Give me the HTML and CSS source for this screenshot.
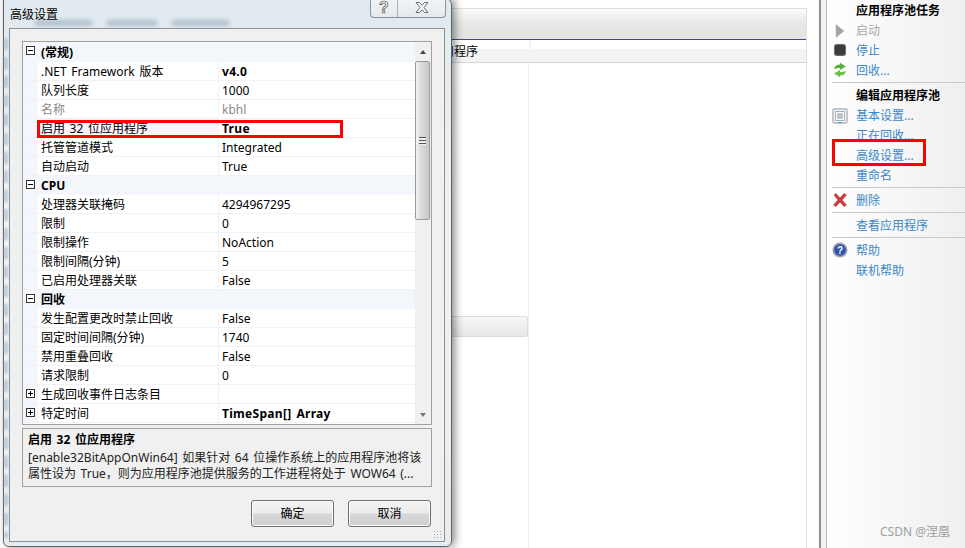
FILE: index.html
```html
<!DOCTYPE html>
<html lang="zh-CN">
<head>
<meta charset="utf-8">
<title>高级设置</title>
<link rel="stylesheet" href="styles.css">
</head>
<body>
<div class="desktop">
  <section class="features">
    <div class="features-head"></div>
    <div class="columns"><div class="col col-a">应用程序</div><div class="col col-b"></div></div>
    <div class="rows"><div class="rows-a"><div class="selected-row"></div></div></div>
  </section>

  <aside class="actions">
    <h3 class="act-title">应用程序池任务</h3>
    <div class="act act-short act-off"><svg class="ico" viewBox="0 0 16 16"><path d="M4 1.500l8 6.500-8 6.500z" fill="#a4a4a4" stroke="#b8b8b8" stroke-width=".6"/></svg>启动</div>
    <div class="act"><svg class="ico" viewBox="0 0 16 16"><rect x="2.500" y="2.500" width="11" height="11" rx="2" fill="#3c3c3c" stroke="#6a6a6a"/></svg>停止</div>
    <div class="act"><svg class="ico" viewBox="0 0 16 16"><path d="M2 7c.5-3 3-4.500 6-4.500V.8L14 4.500 8 8V6C6 6 4.500 6.300 2 7z" fill="#58b038"/><path d="M14 9c-.5 3-3 4.500-6 4.500v1.700L2 11.500 8 8v2c2 0 3.500-.3 6-1z" fill="#6cc04a"/></svg>回收...</div>
    <hr class="act-sep">
    <h3 class="act-title">编辑应用程序池</h3>
    <div class="act act-short"><svg class="ico" viewBox="0 0 16 16"><rect x="1" y="1" width="14" height="14" rx="1" fill="#f4f6f8" stroke="#8c96a0"/><rect x="3.500" y="3.500" width="9" height="9" fill="#fff" stroke="#a8b0b8"/><path d="M5 6h6M5 8h6M5 10h6" stroke="#7a8a9a"/><path d="M6 14.500h4" stroke="#3aa0e0"/></svg>基本设置...</div>
    <div class="act">正在回收...</div>
    <div class="act">高级设置...</div>
    <div class="act">重命名</div>
    <hr class="act-sep">
    <div class="act"><svg class="ico" viewBox="0 0 16 16"><path d="M2 3l2-1.500L8 6l4-4.500L14.500 3 10 8l4.500 5-2.500 1.500L8 10l-4 4.500L1.500 13 6 8z" fill="#d43a3a" stroke="#a82c2c" stroke-width=".5"/></svg>删除</div>
    <hr class="act-sep">
    <div class="act">查看应用程序</div>
    <hr class="act-sep">
    <div class="act"><svg class="ico" viewBox="0 0 16 16"><circle cx="8" cy="8" r="7.500" fill="#9aa2ac"/><circle cx="8" cy="8" r="5.800" fill="#2c52b0"/><text x="8" y="11.500" class="ico-q">?</text></svg>帮助</div>
    <div class="act">联机帮助</div>
    <div class="mark">CSDN @涅凰</div>
  </aside>

  <div class="dialog">
    <div class="glass-left"></div>
    <div class="glass-blur"><span class="b1"></span><span class="b2"></span><span class="b3"></span></div>
    <div class="titlebar">
      <span class="title">高级设置</span>
      <div class="win-btns">
        <span class="win-btn win-help">?</span>
        <span class="win-btn win-close"><svg viewBox="0 0 14 11" width="14" height="11"><path d="M1 .5h3.500L7 3.200 9.500.5H13L9 5.500l4 5H9.500L7 7.800 4.500 10.500H1l4-5z" fill="#f0f3f5" stroke="#59626a" stroke-width=".9"/></svg></span>
      </div>
    </div>
    <div class="client">
      <div class="grid-box">
        <div class="grid">
          <div class="row cat"><span class="gutter"><i class="tog minus"></i></span><span class="cat-name">(常规)</span></div>
          <div class="row"><span class="gutter"></span><span class="name">.NET Framework 版本</span><span class="val strong">v4.0</span></div>
          <div class="row"><span class="gutter"></span><span class="name">队列长度</span><span class="val">1000</span></div>
          <div class="row off"><span class="gutter"></span><span class="name">名称</span><span class="val">kbhl</span></div>
          <div class="row sel"><span class="gutter"></span><span class="name">启用 32 位应用程序</span><span class="val strong">True</span></div>
          <div class="row"><span class="gutter"></span><span class="name">托管管道模式</span><span class="val">Integrated</span></div>
          <div class="row"><span class="gutter"></span><span class="name">自动启动</span><span class="val">True</span></div>
          <div class="row cat"><span class="gutter"><i class="tog minus"></i></span><span class="cat-name">CPU</span></div>
          <div class="row"><span class="gutter"></span><span class="name">处理器关联掩码</span><span class="val">4294967295</span></div>
          <div class="row"><span class="gutter"></span><span class="name">限制</span><span class="val">0</span></div>
          <div class="row"><span class="gutter"></span><span class="name">限制操作</span><span class="val">NoAction</span></div>
          <div class="row"><span class="gutter"></span><span class="name">限制间隔(分钟)</span><span class="val">5</span></div>
          <div class="row"><span class="gutter"></span><span class="name">已启用处理器关联</span><span class="val">False</span></div>
          <div class="row cat"><span class="gutter"><i class="tog minus"></i></span><span class="cat-name">回收</span></div>
          <div class="row"><span class="gutter"></span><span class="name">发生配置更改时禁止回收</span><span class="val">False</span></div>
          <div class="row"><span class="gutter"></span><span class="name">固定时间间隔(分钟)</span><span class="val">1740</span></div>
          <div class="row"><span class="gutter"></span><span class="name">禁用重叠回收</span><span class="val">False</span></div>
          <div class="row"><span class="gutter"></span><span class="name">请求限制</span><span class="val">0</span></div>
          <div class="row"><span class="gutter"><i class="tog plus"></i></span><span class="name">生成回收事件日志条目</span><span class="val"></span></div>
          <div class="row"><span class="gutter"><i class="tog plus"></i></span><span class="name">特定时间</span><span class="val strong">TimeSpan[] Array</span></div>
        </div>
        <div class="scroll">
          <span class="arrow up"></span>
          <div class="thumb"><span class="grip"></span></div>
          <span class="arrow down"></span>
        </div>
      </div>
      <div class="desc">
        <div class="desc-title">启用 32 位应用程序</div>
        <div class="desc-text">[enable32BitAppOnWin64] 如果针对 64 位操作系统上的应用程序池将该</div>
        <div class="desc-text">属性设为 True，则为应用程序池提供服务的工作进程将处于 WOW64 (...</div>
      </div>
      <div class="buttons">
        <button class="btn" type="button">确定</button>
        <button class="btn" type="button">取消</button>
      </div>
      <div class="resize"></div>
    </div>
  </div>

  <div class="redbox redbox-a"></div>
  <div class="redbox redbox-b"></div>
</div>
</body>
</html>
```

FILE: styles.css
```css
* { box-sizing: border-box; }
html, body { margin: 0; padding: 0; }
body {
  width: 965px; height: 548px; overflow: hidden; background: #fff; color: #000;
  font: 12px/19px "Noto Sans", "Noto Sans CJK SC", sans-serif;
}
.desktop { position: relative; width: 965px; height: 548px; overflow: hidden; }

/* background window */
.features { position: absolute; left: 440px; top: 8px; width: 367px; height: 540px; border: 1px solid #dedede; border-bottom: 0; background: #fff; }
.features-head { height: 31px; background: linear-gradient(#fbfbfb, #e9e8e8 45%, #e3e2e2); border-bottom: 1px solid #4a4a78; }
.columns { display: flex; height: 23px; border-bottom: 1px solid #d6d6d6; background: linear-gradient(#fff 40%, #f3f4f6 40%); }
.col-a { display: flex; justify-content: flex-end; width: 90px; border-right: 2px solid #f4f4f6; padding-right: 51px; line-height: 23px; white-space: nowrap; }
.rows { height: 100%; }
.rows-a { width: 88px; height: 100%; border-right: 1px solid #e9f0f8; padding-top: 253px; }
.selected-row { height: 21px; background: linear-gradient(#f6f6f6, #e6e6e6); border: 1px solid #dcdcdc; border-radius: 2px; }

/* actions */
.actions { position: absolute; left: 819px; top: 0; width: 146px; height: 548px; border-left: 2px solid #8f8f8f; background: linear-gradient(90deg, #f3f3f3 5px, #b8b8b8 5px, #b8b8b8 6px, transparent 6px), linear-gradient(90deg, #fff, #efefef); }
.act-title { margin: 0; padding: 1px 0 0 35px; font-size: 12px; line-height: 20px; height: 21px; font-weight: 700; color: #000; }
.act { position: relative; height: 20px; line-height: 22px; padding-left: 35px; color: #3a87c8; }
.act-short { height: 19px; line-height: 20px; }
.act-off { color: #a8a8a8; }
.act-sep { height: 1px; border: 0; margin: 2px 0 2px 11px; background: #c9c9c9; }
.ico { position: absolute; left: 11px; top: 2px; width: 16px; height: 16px; }
.ico-q { font: 700 10px "Liberation Sans", sans-serif; fill: #fff; text-anchor: middle; }
.mark { position: absolute; right: 15px; bottom: 8px; color: #a0a0a0; font-size: 12px; line-height: 16px; }

/* dialog */
.dialog { position: absolute; left: 3px; top: -3px; width: 449px; height: 550px; border: 1px solid #5e6468; border-radius: 0 8px 6px 6px; background: linear-gradient(#dfe9ef, #eef2f4 40%, #e6edf0); box-shadow: 3px 0 9px rgba(0,0,0,.45); }
.glass-blur { position: absolute; left: 0; top: 22px; display: flex; gap: 15px; padding-left: 31px; filter: blur(2px); }
.glass-blur span { height: 6px; background: #93a4b4; opacity: .6; }
.b1 { width: 57px; } .b2 { width: 50px; } .b3 { width: 57px; }
.glass-left { position: absolute; left: 0; top: 40px; width: 4px; height: 500px; opacity: .5; filter: blur(1px); background: repeating-linear-gradient(#8fa4bc 0 12px, transparent 12px 19px); }
.titlebar { position: relative; display: flex; justify-content: space-between; height: 30px; padding-left: 6px; }
.title { line-height: 34px; color: #000; }
.win-btns { display: flex; height: 20px; margin-right: 5px; border: 1px solid #8a9298; border-top: 0; border-radius: 0 0 4px 4px; background: linear-gradient(#f4f6f7, #e4e9ec); }
.win-btn { display: flex; align-items: center; justify-content: center; }
.win-help { width: 27px; border-right: 1px solid #aab0b4; font: 700 16px "Liberation Sans", sans-serif; color: #f4f4f4; -webkit-text-stroke: .7px #555; }
.win-close { width: 47px; }
.client { position: relative; margin: 0 6px 0 5px; height: 514px; background: #f0f0f0; border: 1px solid #8c9094; padding: 12px 12px 0; word-spacing: 1.500px; }
.grid-box { display: flex; height: 384px; border: 1px solid #a0a0a0; background: #fff; }
.grid { width: 392px; flex: none; overflow: hidden; }
.row { display: flex; height: 19px; line-height: 20px; border-bottom: 1px solid #f0f3f6; }
.row:first-child { height: 20px; line-height: 22px; }
.gutter { position: relative; flex: none; width: 15px; background: #f3f6fb; }
.tog { position: absolute; left: 3px; top: 4px; width: 9px; height: 9px; border: 1px solid #333; background: #fff; }
.tog::before { content: ""; position: absolute; left: 1px; top: 3px; width: 5px; height: 1px; background: #000; }
.plus::after { content: ""; position: absolute; left: 3px; top: 1px; width: 1px; height: 5px; background: #000; }
.name { flex: none; width: 181px; padding-left: 3px; border-right: 1px solid #f0f3f6; white-space: nowrap; overflow: hidden; }
.val { flex: 1; padding-left: 3px; white-space: nowrap; }
.strong { font-weight: 700; letter-spacing: .3px; }
.off { color: #8a8a8a; }
.sel .name { background: #f3f6fb; }
.cat { background: #f3f6fb; border-bottom: 0; font-weight: 700; }
.cat-name { padding-left: 3px; }
.scroll { flex: 1; display: flex; flex-direction: column; background: #f0f0f0; position: relative; }
.arrow { flex: none; height: 19px; position: relative; }
.arrow::before { content: ""; position: absolute; left: 5px; border-left: 3.500px solid transparent; border-right: 3.500px solid transparent; }
.up::before { top: 8px; border-bottom: 4px solid #444; }
.down::before { top: 8px; border-top: 4px solid #777; }
.thumb { flex: none; height: 159px; margin: 0 1px 0 0; border: 1px solid #9a9a9a; border-radius: 2px; background: linear-gradient(90deg, #f4f4f4, #dcdcdc 35%, #c8c8c8); display: flex; align-items: center; justify-content: center; }
.grip { width: 7px; height: 8px; background: repeating-linear-gradient(#555 0 1px, #eee 1px 3px); }
.scroll .down { margin-top: auto; }
.desc { height: 59px; margin-top: 3px; border: 1px solid #a0a0a0; padding: 1px 5px; line-height: 19px; }
.desc-title { font-weight: 700; height: 20px; }
.desc-text { white-space: nowrap; line-height: 16px; color: #222; }
.buttons { display: flex; justify-content: flex-end; gap: 14px; margin-top: 13px; padding-right: 1px; }
.btn { width: 83px; height: 27px; padding: 0; font: inherit; color: #000; border: 1px solid #707070; border-radius: 3px; background: linear-gradient(#f4f4f4, #ebebeb 48%, #d8d8d8 52%, #cfcfcf); box-shadow: inset 0 0 0 1px #fbfbfb; }
.resize { position: absolute; right: 2px; bottom: 2px; width: 9px; height: 9px; background: radial-gradient(circle, #a6a6a6 0.8px, transparent 1px) 0 0 / 3px 3px; }

/* annotations */
.redbox { position: absolute; border: 3px solid #f00; }
.redbox-a { left: 37px; top: 120px; width: 306px; height: 18px; }
.redbox-b { left: 832px; top: 139px; width: 94px; height: 27px; }
```
